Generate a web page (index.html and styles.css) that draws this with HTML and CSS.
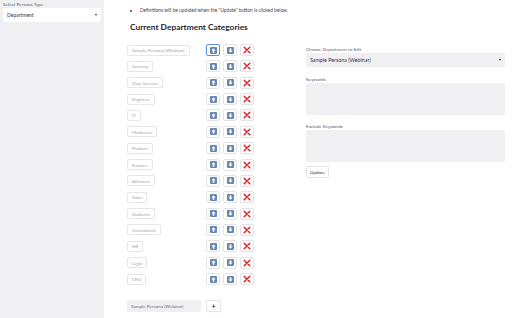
FILE: index.html
```html
<!DOCTYPE html>
<html>
<head>
<meta charset="utf-8">
<link rel="stylesheet" href="styles.css">
</head>
<body>
<div class="app">
  <aside class="sidebar">
    <div class="label">Select Persona Type</div>
    <div class="select white"><span>Department</span><span class="caret"></span></div>
  </aside>
  <main class="main">
    <ul class="notes"><li>Definitions will be updated when the "Update" button is clicked below.</li></ul>
    <h2 class="title">Current Department Categories</h2>
    <div class="cols">
      <div class="left">
        <div class="rows" id="rows"></div>
        <div class="addrow">
          <div class="addinput">Sample Persona (Webinar)</div>
          <div class="btn plus">+</div>
        </div>
      </div>
      <div class="right">
        <div class="label">Choose Department to Edit</div>
        <div class="select gray"><span>Sample Persona (Webinar)</span><span class="caret"></span></div>
        <div class="label">Keywords</div>
        <div class="textarea"></div>
        <div class="label">Exclude Keywords</div>
        <div class="textarea"></div>
        <div class="btn update">Update</div>
      </div>
    </div>
  </main>
</div>
<script src="app.js"></script>
</body>
</html>
```
FILE: app.js
```js
const names = ["Sample Persona (Webinar)","Security","Data Science","Engineer","IT","Marketers","Product","Finance","Alliances","Sales","Students","Consultants","HR","Legal","CEO"];
const up = '<svg width="7" height="7" viewBox="0 0 7 7"><rect width="7" height="7" rx="1" fill="#6686ab"/><path d="M3.5 1.3 L5.6 3.5 H4.3 V5.7 H2.7 V3.5 H1.4 Z" fill="#fff"/></svg>';
const down = '<svg width="7" height="7" viewBox="0 0 7 7"><rect width="7" height="7" rx="1" fill="#6686ab"/><path d="M3.5 5.7 L5.6 3.5 H4.3 V1.3 H2.7 V3.5 H1.4 Z" fill="#fff"/></svg>';
const x = '<svg width="8" height="8" viewBox="0 0 8 8"><path d="M1.2 1.2 L6.8 6.8 M6.8 1.2 L1.2 6.8" stroke="#e21b1b" stroke-width="1.4" stroke-linecap="round"/></svg>';
const rows = document.getElementById('rows');
names.forEach((n, i) => {
  const r = document.createElement('div');
  r.className = 'row';
  r.innerHTML = '<div class="tagcell"><span class="tag">' + n + '</span></div>' +
    '<div class="btn icon' + (i === 0 ? ' focus' : '') + '">' + up + '</div>' +
    '<div class="btn icon">' + down + '</div>' +
    '<div class="btn icon">' + x + '</div>';
  rows.appendChild(r);
});
```
FILE: styles.css
```css
* { box-sizing: border-box; }
html, body { margin: 0; padding: 0; background: #fff; }
body { font-family: "Lato", "Open Sans", sans-serif; color: #31333f; width: 512px; height: 318px; overflow: hidden; }
.app { display: flex; height: 318px; }
.sidebar { width: 104px; background: #f0f0f2; padding: 1px 3px 0 3px; flex: none; }
.label { font-size: 4.6px; color: #5c5d66; line-height: 6px; height: 6px; }
.select { height: 14px; border-radius: 2px; display: flex; align-items: center; justify-content: space-between; padding: 0 4px; font-size: 5px; margin-top: 1px; }
.select.white { background: #fff; }
.select.gray { background: #f0f0f2; height: 14px; font-size: 5.3px; }
.caret { width: 0; height: 0; border-left: 1.5px solid transparent; border-right: 1.5px solid transparent; border-top: 2px solid #31333f; }
.main { flex: 1; padding: 0 7px 0 23px; }
.notes { margin: 0; padding: 7px 0 0 13px; font-size: 4.8px; line-height: 6px; list-style: disc; color: #44454f; }
.notes li::marker { font-size: 5px; }
.title { margin: 9px 0 0 3px; font-size: 8.4px; font-weight: 700; line-height: 11px; letter-spacing: 0; color: #262730; }
.cols { display: grid; grid-template-columns: 179px 199px; margin-top: 11px; }
.left { display: flex; flex-direction: column; }
.rows { display: flex; flex-direction: column; gap: 4.36px; }
.row { display: flex; align-items: center; height: 12px; }
.tagcell { width: 79px; display: flex; }
.tag { height: 11px; border: 1px solid #e6e6ea; border-radius: 2px; font-size: 4.6px; color: #a3a3ab; padding: 0 4px; display: flex; align-items: center; white-space: nowrap; }
.btn { border: 1px solid #e4e4e8; border-radius: 2px; background: #fff; display: flex; align-items: center; justify-content: center; }
.icon { width: 14px; height: 12px; margin-right: 3px; }
.icon.focus { border-color: #5b8de0; }
.addrow { display: flex; align-items: center; margin-top: 15px; }
.addinput { width: 74px; height: 12px; background: #f0f0f2; border-radius: 2px; font-size: 4.6px; color: #6b6b75; padding: 0 4px; display: flex; align-items: center; margin-right: 5px; }
.plus { width: 15px; height: 12px; font-size: 8px; font-weight: 700; line-height: 1; }
.right { padding-top: 2px; }
.right .select { margin-bottom: 9px; }
.textarea { height: 32px; background: #f0f0f2; border-radius: 2px; margin: 1px 0 8px; }
.update { width: 23px; height: 12px; font-size: 4.6px; margin-top: -4px; }
```
